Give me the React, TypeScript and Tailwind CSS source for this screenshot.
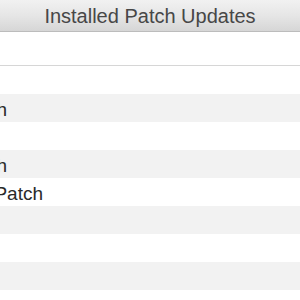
import React from 'react';

const rows: { text?: string; end?: string }[] = [
  {},
  { text: 'Flash Player Patch', end: 'w-[7px]' },
  {},
  { text: 'Safari Security Patch', end: 'w-[7px]' },
  { text: 'Java Runtime Patch', end: 'w-[43px]' },
  {},
  {},
  {},
  {},
];

export default function App() {
  return (
    <div className="w-[300px] h-[300px] overflow-hidden bg-white font-['Liberation_Sans',Arial,sans-serif]">
      <div className="h-[32px] border-b border-[#bcbcbc] bg-gradient-to-b from-[#f1f1f1] via-[#e6e6e6] to-[#d6d6d6] flex items-center justify-center text-[20px] text-[#474747] pt-[1px]">
        Installed Patch Updates
      </div>
      <div className="h-[34px] border-b border-[#d6d6d6]" />
      {rows.map((r, i) => (
        <div
          key={i}
          className={`h-[28px] flex items-start pt-[5px] text-[19px] leading-[22px] text-[#2a2a2a] ${
            i % 2 === 1 ? 'bg-[#f2f2f2]' : 'bg-white'
          }`}
        >
          {r.text && (
            <div className={`flex justify-end whitespace-nowrap ${r.end}`}>{r.text}</div>
          )}
        </div>
      ))}
    </div>
  );
}
